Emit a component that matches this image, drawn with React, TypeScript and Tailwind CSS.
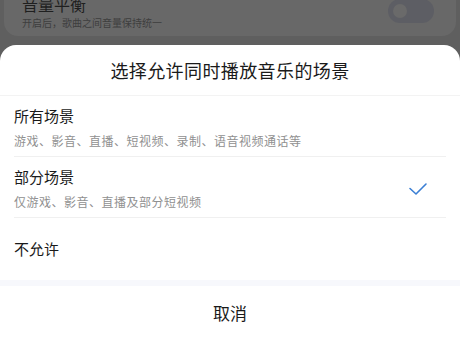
const font = { fontFamily: '"Noto Sans CJK SC", "Noto Sans", sans-serif' };

const options = [
  { title: "所有场景", desc: "游戏、影音、直播、短视频、录制、语音视频通话等", checked: false },
  { title: "部分场景", desc: "仅游戏、影音、直播及部分短视频", checked: true },
];

const Check = () => (
  <svg width="20" height="14" viewBox="0 0 20 14" fill="none">
    <path d="M2 6.5 L8 12 L18 2" stroke="#3b7fd4" strokeWidth="1.6" strokeLinecap="round" strokeLinejoin="round" />
  </svg>
);

export default function App() {
  return (
    <div className="w-[460px] h-[340px] overflow-hidden flex flex-col bg-[#5f5f5f]" style={font}>
      {/* dimmed settings page behind the sheet */}
      <div className="h-[45px] px-[4px] shrink-0">
        <div className="h-[40px] -mt-[4px] rounded-b-[14px] bg-[#686868] flex items-center justify-between pl-[18px] pr-[22px]">
          <div className="flex flex-col">
            <span className="text-[16px] leading-[20px] text-[#1f1f1f] -mt-[8px]">音量平衡</span>
            <span className="text-[10px] leading-[14px] text-[#3e3e3e] mt-[2px]">开启后，歌曲之间音量保持统一</span>
          </div>
          <div className="w-[46px] h-[24px] -mt-[10px] rounded-full bg-[#5d5e64] flex items-center pl-[5px]">
            <div className="w-[14px] h-[14px] rounded-full bg-[#6a6a6a]" />
          </div>
        </div>
      </div>

      {/* bottom sheet */}
      <div className="flex-1 bg-white rounded-t-[16px] flex flex-col">
        <div className="h-[51px] flex items-center justify-center border-b border-[#f3f3f3]">
          <span className="text-[18px] text-[#1a1a1a] tracking-[0.4px] mt-[1px]">选择允许同时播放音乐的场景</span>
        </div>
        <div className="px-[14px]">
          {options.map((o) => (
            <div key={o.title} className="h-[61px] flex items-center justify-between border-b border-[#f0f0f0]">
              <div className="flex flex-col mt-[2px]">
                <span className="text-[15px] leading-[20px] text-[#1a1a1a]">{o.title}</span>
                <span className="text-[12px] leading-[16px] text-[#909090] mt-[7px] tracking-[0.5px]">{o.desc}</span>
              </div>
              {o.checked && (
                <div className="mr-[18px] mt-[3px]">
                  <Check />
                </div>
              )}
            </div>
          ))}
          <div className="h-[62px] flex items-center">
            <span className="text-[15px] text-[#1a1a1a]">不允许</span>
          </div>
        </div>
        <div className="h-[6px] bg-[#f7f8fc]" />
        <div className="flex-1 flex items-center justify-center">
          <span className="text-[17px] text-[#1a1a1a]">取消</span>
        </div>
      </div>
    </div>
  );
}
